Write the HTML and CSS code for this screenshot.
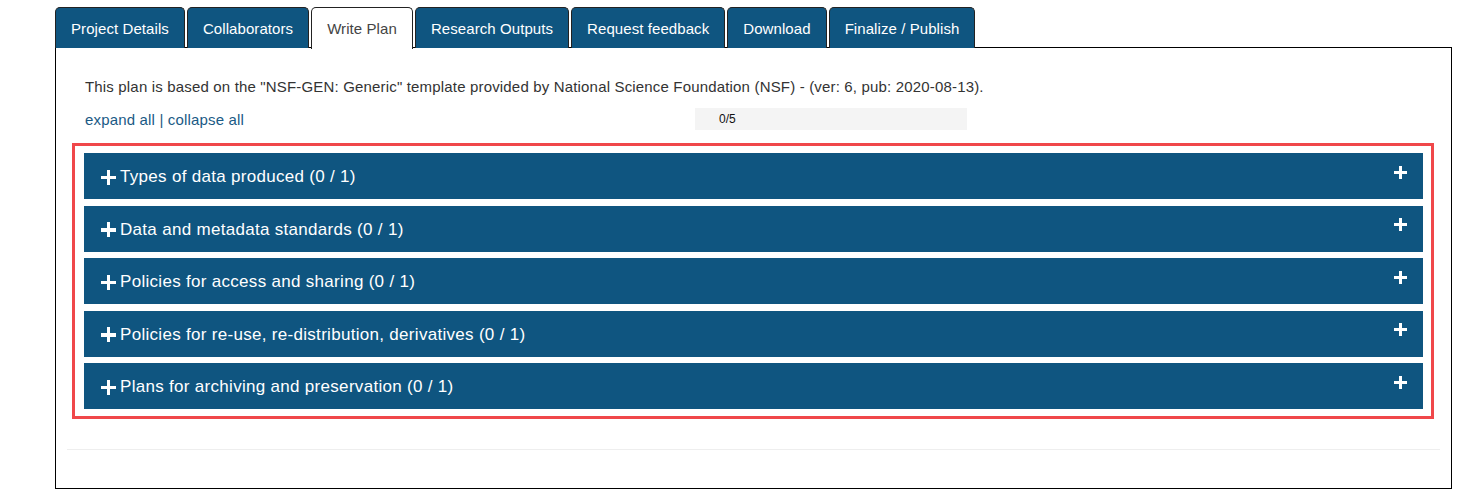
FILE: index.html
```html
<!DOCTYPE html>
<html>
<head>
<meta charset="utf-8">
<link rel="stylesheet" href="styles.css">
</head>
<body>
<div class="page">
  <ul class="tabs">
    <li class="tab">Project Details</li>
    <li class="tab">Collaborators</li>
    <li class="tab active">Write Plan</li>
    <li class="tab">Research Outputs</li>
    <li class="tab">Request feedback</li>
    <li class="tab">Download</li>
    <li class="tab">Finalize / Publish</li>
  </ul>
  <div class="content">
    <p class="intro">This plan is based on the "NSF-GEN: Generic" template provided by National Science Foundation (NSF) - (ver: 6, pub: 2020-08-13).</p>
    <div class="toolbar">
      <div class="links"><a href="#">expand all</a> | <a href="#">collapse all</a></div>
      <div class="progress">0/5</div>
    </div>
    <div class="highlight">
      <div class="sections">
        <div class="section"><span class="title"><span class="plus"></span>Types of data produced (0 / 1)</span><span class="plus small"></span></div>
        <div class="section"><span class="title"><span class="plus"></span>Data and metadata standards (0 / 1)</span><span class="plus small"></span></div>
        <div class="section"><span class="title"><span class="plus"></span>Policies for access and sharing (0 / 1)</span><span class="plus small"></span></div>
        <div class="section"><span class="title"><span class="plus"></span>Policies for re-use, re-distribution, derivatives (0 / 1)</span><span class="plus small"></span></div>
        <div class="section"><span class="title"><span class="plus"></span>Plans for archiving and preservation (0 / 1)</span><span class="plus small"></span></div>
      </div>
    </div>
    <div class="rule"></div>
  </div>
</div>
</body>
</html>
```

FILE: styles.css
```css
* { box-sizing: border-box; }
html, body { margin: 0; padding: 0; background: #fff; }
body { font-family: "Liberation Sans", Arial, sans-serif; color: #333; }

.page {
  margin: 7px 8px 0 55px;
  width: 1397px;
}

.tabs {
  list-style: none;
  margin: 0;
  padding: 0;
  display: flex;
  gap: 2px;
  border-bottom: 1px solid #000;
  height: 41px;
}
.tab {
  background: #0f5580;
  color: #fff;
  font-size: 15px;
  letter-spacing: 0.08px;
  height: 41px;
  padding: 0 15px;
  display: flex;
  align-items: center;
  border: 1px solid #222;
  border-bottom: none;
  border-radius: 5px 5px 0 0;
}
.tab.active {
  background: #fff;
  color: #444;
  height: 42px;
  margin-bottom: -1px;
}

.content {
  border: 1px solid #000;
  border-top: none;
  height: 441px;
  padding: 30px 11px 0 16px;
}
.intro {
  margin: 0 0 0 13px;
  font-size: 15px;
  letter-spacing: 0.17px;
  line-height: 18px;
}
.toolbar {
  display: flex;
  align-items: center;
  margin: 12px 0 0 13px;
  height: 22px;
}
.links {
  font-size: 15px;
  letter-spacing: 0.17px;
  color: #1a5a85;
  width: 610px;
}
.links a { color: #1a5a85; text-decoration: none; }
.progress {
  width: 272px;
  height: 22px;
  background: #f4f4f4;
  font-size: 12px;
  color: #111;
  padding-left: 24px;
  display: flex;
  align-items: center;
}

.highlight {
  margin-top: 13px;
  border: 3px solid #f0474a;
  width: 1362px;
  padding: 7px 8px 7px 9px;
}
.sections {
  display: flex;
  flex-direction: column;
  gap: 6.5px;
}
.section {
  height: 46px;
  background: #0f5580;
  color: #fff;
  display: flex;
  align-items: center;
  justify-content: space-between;
  padding: 0 16px 0 17px;
}
.title {
  display: flex;
  align-items: center;
  font-size: 17px;
  letter-spacing: 0.3px;
  margin-top: 2px;
}
.plus {
  position: relative;
  display: inline-block;
  width: 15px;
  height: 15px;
  margin-right: 4px;
}
.plus::before, .plus::after {
  content: "";
  position: absolute;
  background: #fff;
}
.plus::before { left: 0; right: 0; top: 6px; height: 3.5px; }
.plus::after { top: 0; bottom: 0; left: 5.7px; width: 3.5px; }
.plus.small {
  width: 13px;
  height: 13px;
  margin: -8px 0 0 0;
}
.plus.small::before { top: 5px; height: 3px; }
.plus.small::after { left: 5px; width: 3px; }

.rule {
  margin: 30px 0 0 -5px;
  width: 1373px;
  height: 1px;
  background: #eee;
}
```
